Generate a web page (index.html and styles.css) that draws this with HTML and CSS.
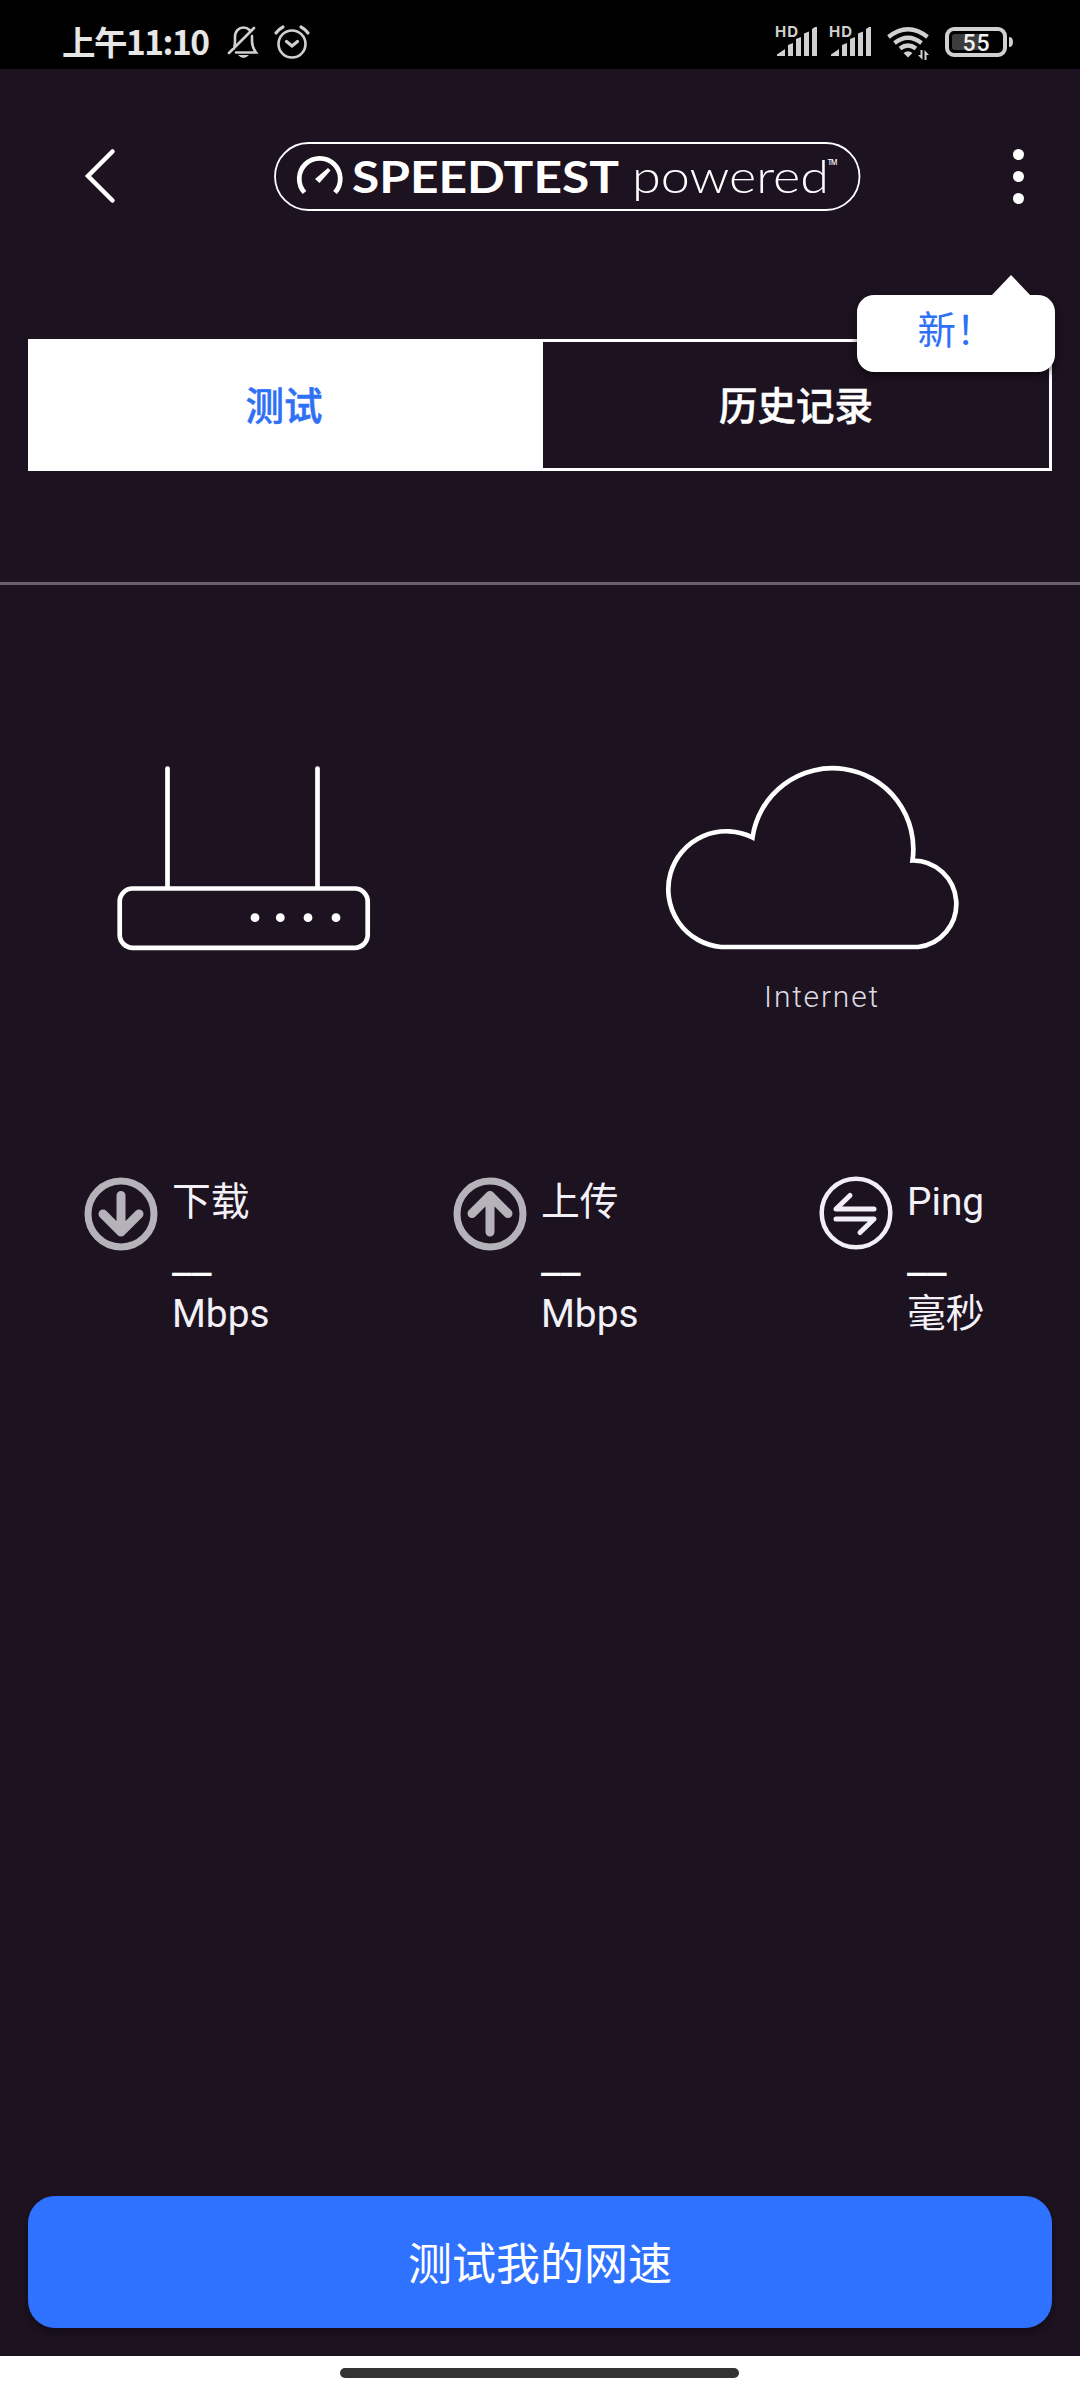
FILE: index.html
```html
<!DOCTYPE html>
<html lang="zh-CN">
<head>
<meta charset="utf-8">
<title>SPEEDTEST powered</title>
<link rel="stylesheet" href="styles.css">
</head>
<body>
<div class="screen">
  <div class="status">
    <svg class="status-left" viewBox="0 0 330 69">
      <text class="clock" x="62" y="55" textLength="148" lengthAdjust="spacing">上午11:10</text>
      <g class="line">
        <path d="M234 48.500Q235 46 235 41V37C235 31 239 27.500 243.500 27.500C246 27.500 248 28.500 249.500 30M252 36V41C252 47 254 49.500 256 52.500H236M229 53L254 28"/>
        <circle cx="292" cy="44" r="13.500"/>
        <path d="M286.500 41.500L292 46L297.500 41.500M276 33Q279 29 283 27M301 27Q305 29 308 33" stroke-width="3.200"/>
      </g>
      <path class="fill" d="M238 55H249Q243.500 61 238 55Z"/>
    </svg>
    <svg class="status-right" viewBox="770 0 250 69">
      <defs>
        <g id="signal">
          <text class="hd" x="775" y="37" textLength="23">HD</text>
          <path class="fill" d="M777 56V54.500L785 49V56ZM788 56V45L793 43V56ZM796 56V39L801 37V56ZM804 56V33.500L809 31.500V56ZM812 56V29L815 27H817V56Z"/>
        </g>
      </defs>
      <use href="#signal"/>
      <use href="#signal" x="54"/>
      <g class="wifi">
        <path d="M888.500 37Q908 21.500 927.500 37M894.500 43Q908 32.500 921.500 43M900 48.500Q908 42.500 916 48.500"/>
      </g>
      <path class="fill" d="M903.500 53Q908 49.500 912.500 53L908 57.500ZM918 55H920.500V50H922.500V60ZM924.500 50L929 55H926.500V60H924.500Z"/>
      <rect x="952" y="34" width="28" height="16" rx="3" fill="#3c3c3c"/>
      <rect class="battery" x="947" y="29" width="58" height="26" rx="7"/>
      <path class="fill" d="M1009 37Q1013 37 1013 42T1009 47Z"/>
      <text class="percent" x="962.500" y="51" textLength="27">55</text>
    </svg>
  </div>

  <header class="header">
    <svg class="back" viewBox="80 144 40 66"><path d="M112.500 151.500L88 176L112.500 200.500"/></svg>
    <svg class="logo" viewBox="272 140 592 73">
      <rect x="275" y="143" width="584.500" height="67" rx="33.500"/>
      <path class="gauge" d="M304.500 192.500A20.500 20.500 0 1 1 335 192.500"/>
      <path class="needle" d="M328 168L330.500 170.500L319.500 183L315 179Z"/>
      <text class="brand" x="352" y="192.500" textLength="267" lengthAdjust="spacingAndGlyphs">SPEEDTEST</text>
      <text class="powered" x="632" y="192.500" textLength="197" lengthAdjust="spacingAndGlyphs">powered</text>
      <text class="tm" x="827.500" y="164.500" textLength="10">TM</text>
    </svg>
    <div class="menu"><i></i><i></i><i></i>
      <div class="tooltip">新！</div>
    </div>
  </header>

  <nav class="tabs">
    <div class="tab active">测试</div>
    <div class="tab">历史记录</div>
  </nav>

  <main class="main">
    <section class="route">
      <svg class="router" viewBox="116 764 256 188">
        <path d="M167.500 768.500V888M317.500 768.500V888"/>
        <rect x="119.700" y="888.500" width="248" height="59.300" rx="13"/>
        <g class="leds"><circle cx="255" cy="917.700" r="4.400"/><circle cx="280.300" cy="917.700" r="4.400"/><circle cx="308" cy="917.700" r="4.400"/><circle cx="336" cy="917.700" r="4.400"/></g>
      </svg>
      <div class="internet">
        <svg class="cloud" viewBox="664 764 298 188">
          <path d="M721 947A58 58 0 1 1 752.500 837.500A80.500 80.500 0 0 1 912.500 860.500A43.400 43.400 0 0 1 918 947Z"/>
        </svg>
        <div class="label">Internet</div>
      </div>
    </section>

    <section class="metrics">
      <div class="metric">
        <svg viewBox="0 0 76 76"><circle cx="38" cy="38" r="33"/><path d="M38 19.500V56M20 38L38 56L56 38"/></svg>
        <div class="values"><div class="name">下载</div><div class="value">__</div><div class="name">Mbps</div></div>
      </div>
      <div class="metric">
        <svg viewBox="0 0 76 76"><circle cx="38" cy="38" r="33"/><path d="M38 56V19.500M20 37.500L38 19.500L56 37.500"/></svg>
        <div class="values"><div class="name">上传</div><div class="value">__</div><div class="name">Mbps</div></div>
      </div>
      <div class="metric ping">
        <svg viewBox="0 0 76 76"><circle cx="38" cy="37" r="34.300"/><path d="M56 33H18L32 19.500M18 43H56L42 56.500"/></svg>
        <div class="values"><div class="name">Ping</div><div class="value">__</div><div class="name">毫秒</div></div>
      </div>
    </section>
  </main>

  <div class="action"><button class="start">测试我的网速</button></div>
  <footer class="home"><span></span></footer>
</div>
</body>
</html>
```
FILE: styles.css
```css
* { box-sizing: border-box; }
body {
  margin: 0;
  background: #1d1220;
  color: #f3f1f7;
  font-family: Roboto, "Noto Sans CJK SC", sans-serif;
}
svg { display: block; flex: none; fill: none; }
.screen { width: 1080px; height: 2400px; display: flex; flex-direction: column; }

.status { height: 69px; background: #000; display: flex; justify-content: space-between; padding-right: 60px; }
.status-left { width: 330px; height: 69px; }
.status-right { width: 250px; height: 69px; }
.clock { font: 700 33.5px "Noto Sans CJK SC", sans-serif; fill: #e6e6e6; }
.line { stroke: #d0d0d0; stroke-width: 2.6; stroke-linecap: round; }
.fill { fill: #d0d0d0; }
.hd { font: 700 15px Inter, sans-serif; fill: #d0d0d0; }
.wifi { stroke: #d0d0d0; stroke-width: 4.2; }
.battery { stroke: #d0d0d0; stroke-width: 4; }
.percent { font: 500 23px Roboto, sans-serif; fill: #f0f0f0; }

.header { height: 270px; display: flex; justify-content: space-between; align-items: flex-start; padding: 71px 56px 0 80px; }
.back { width: 40px; height: 66px; margin-top: 4px; stroke: #fff; stroke-width: 4.5; stroke-linecap: round; }
.logo { width: 592px; height: 73px; margin-left: 2px; }
.logo rect { stroke: #fff; stroke-width: 1.8; }
.gauge { stroke: #fff; stroke-width: 4.8; }
.needle { fill: #fff; }
.logo text { fill: #fff; }
.brand { font: 700 44.5px Lato, sans-serif; }
.powered { font: 300 46px Lato, sans-serif; }
.tm { font: 500 7px Inter, sans-serif; }
.menu { position: relative; width: 11px; margin-top: 9px; display: flex; flex-direction: column; gap: 11px; }
.menu i { height: 11px; border-radius: 50%; background: #fff; }
.tooltip {
  position: absolute; z-index: 2; top: 146px; right: -31px;
  width: 198px; height: 77px;
  border-radius: 17px; background: #fff; color: #2e70f6;
  font-size: 38.5px; line-height: 72px; text-align: center;
  box-shadow: 0 4px 8px rgba(0, 0, 0, .55);
}
.tooltip::before {
  content: ""; position: absolute; top: -20px; left: 134px;
  width: 40px; height: 21px; background: #fff;
  clip-path: polygon(50% 0, 100% 100%, 0 100%);
}

.tabs { margin: 0 28px; height: 132px; border: 3px solid #fff; display: flex; }
.tab { flex: 1; padding-top: 2px; font-size: 38.5px; font-weight: 500; line-height: 126px; text-align: center; color: #fff; -webkit-text-stroke: .5px currentColor; }
.tab.active { flex: 0 0 512px; padding-right: 6px; background: #fff; color: #2e70f6; }

.main { flex: 1; margin-top: 111px; border-top: 3px solid #6a606c; }
.route { display: flex; justify-content: space-between; padding: 179px 118px 0 116px; }
.router { width: 256px; height: 188px; stroke: #fff; stroke-width: 4.7; stroke-linecap: round; }
.leds { fill: #fff; stroke: none; }
.cloud { width: 298px; height: 188px; stroke: #fff; stroke-width: 4.7; }
.label { margin-top: 25px; padding-left: 18px; font-size: 30px; font-weight: 300; line-height: 40px; letter-spacing: 1.8px; text-align: center; color: #dedae1; }
.metrics { display: grid; grid-template-columns: 369px 366px 1fr; margin-top: 162px; padding-left: 83px; }
.metric { display: flex; gap: 13px; }
.metric svg { width: 76px; height: 76px; margin-top: -3px; stroke: #b5b2b9; stroke-width: 7; }
.metric path { stroke-width: 9; stroke-linecap: round; stroke-linejoin: round; }
.metric.ping svg { stroke: #f1eff5; stroke-width: 4.5; }
.metric.ping path { stroke-width: 5; }
.values { display: flex; flex-direction: column; gap: 11px; }
.name { font-size: 38.8px; line-height: 46px; }
.value { font-size: 44px; line-height: 44px; color: #fff; }

.action { padding: 0 28px 28px; }
.start { display: block; width: 100%; height: 132px; border: 0; border-radius: 27px; padding: 0 0 3px; background: #2e72ff; color: #fff; font: 400 44px Roboto, "Noto Sans CJK SC", sans-serif; box-shadow: 0 4px 6px rgba(0, 0, 0, .35); }
.home { height: 44px; background: #fff; display: flex; justify-content: center; padding: 12px 1px 0 0; }
.home span { width: 399px; height: 10px; border-radius: 5px; background: #333; }
```
